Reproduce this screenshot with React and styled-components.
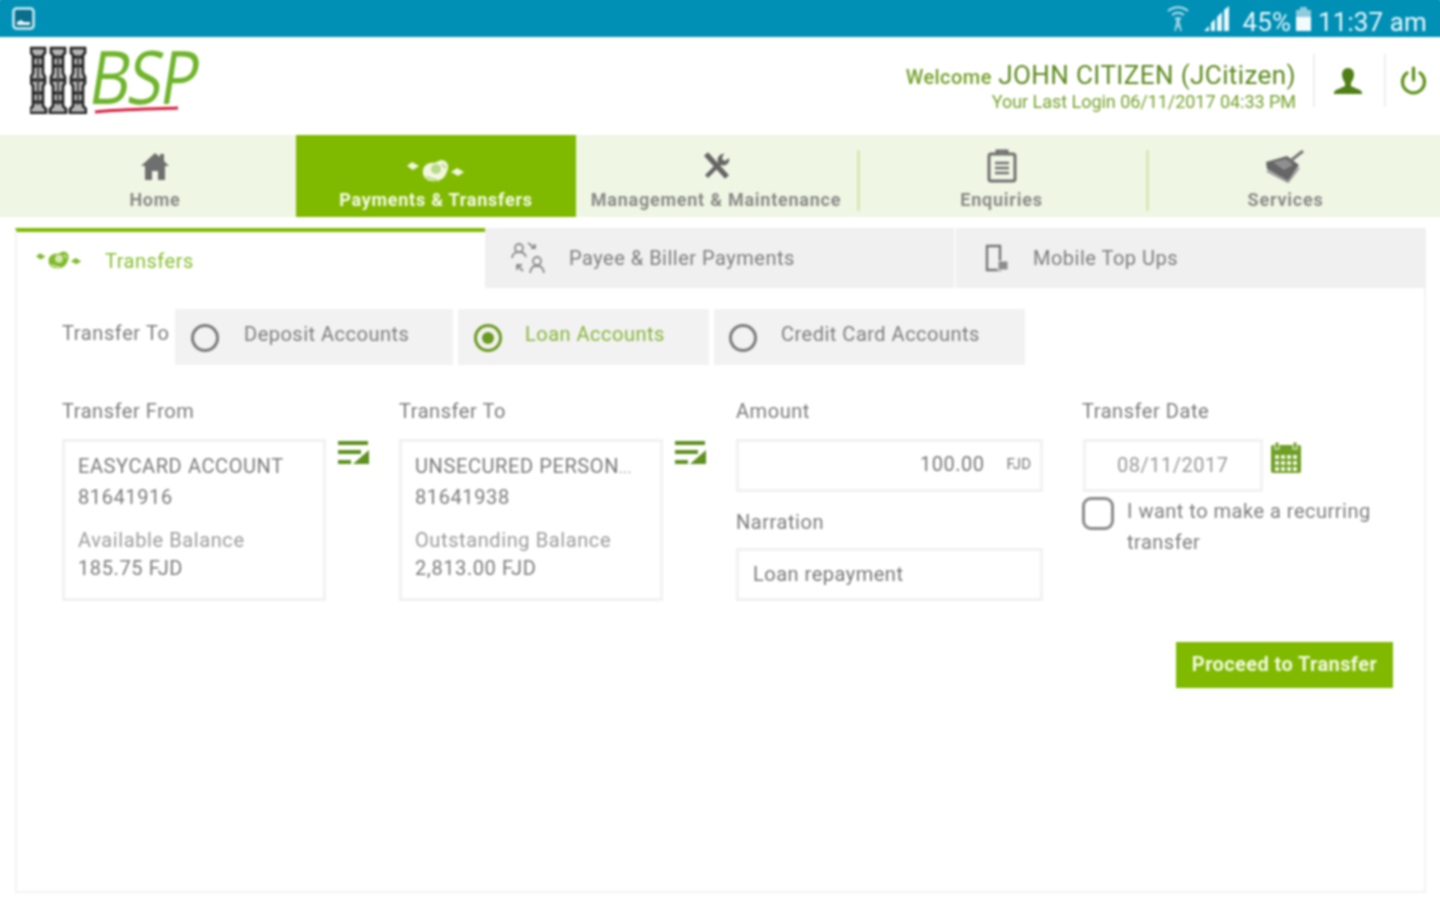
import React from "react";
import styled, { createGlobalStyle } from "styled-components";

const Global = createGlobalStyle`
  html, body { margin: 0; padding: 0; background: #fff; }
  body { font-family: Roboto, "Liberation Sans", sans-serif; width: 1440px; height: 900px; overflow: hidden; }
  * { box-sizing: border-box; }
`;
const Page = styled.div`width:1440px;height:900px;display:flex;flex-direction:column;filter:blur(.8px);`;
const StatusBar = styled.div`height:37px;background:#0090b5;box-shadow:0 -6px 0 #0090b5,-6px 0 0 #0090b5,6px 0 0 #0090b5;display:flex;align-items:center;justify-content:space-between;padding:0 13px 0 12px;color:#e8f6fa;`;
const StatusRight = styled.div`display:flex;align-items:center;font-size:26px;`;
const StatusText = styled.span`margin:${p => p.$m || 0};position:relative;top:3px;letter-spacing:.1px;`;
const Header = styled.header`height:98px;display:flex;justify-content:space-between;padding-left:30px;`;
const Logo = styled.div`display:flex;align-items:flex-start;padding-top:9px;gap:0;position:relative;`;
const LogoWord = styled.span`font-family:"Open Sans",sans-serif;font-weight:400;font-size:74px;line-height:60px;letter-spacing:-3px;color:#6fb52b;transform:skewX(-9deg) scaleX(.86);transform-origin:left center;margin-left:4px;display:block;`;
const Underline = styled.svg`position:absolute;left:64px;top:69px;`;
const UserArea = styled.div`display:flex;align-items:flex-start;padding-top:17px;`;
const Welcome = styled.div`text-align:right;padding:4px 17px 0 0;color:#74a22a;`;
const WelcomeTop = styled.div`font-size:20px;line-height:34px;font-weight:500;white-space:nowrap;letter-spacing:.45px;`;
const WelcomeName = styled.span`font-size:26px;font-weight:400;color:#5c8a1d;letter-spacing:.4px;margin-left:1px;`;
const LastLogin = styled.div`font-size:18px;line-height:22px;margin-top:-3px;letter-spacing:-.04px;white-space:nowrap;`;
const IconCell = styled.div`width:${p => p.$w}px;height:53px;border-left:2px solid #efefef;display:flex;align-items:center;justify-content:center;padding-right:${p => p.$pr || 0}px;`;
const Nav = styled.nav`display:grid;grid-template-columns:296px 280px 282px 289px 293px;height:82px;background:#f0f6e4;box-shadow:-6px 0 0 #f0f6e4,6px 0 0 #f0f6e4;`;
const NavItem = styled.div`position:relative;display:flex;flex-direction:column;align-items:center;padding:${p => p.$active ? 22 : 14}px ${p => p.$pr || 0}px 0 ${p => p.$pl || 0}px;background:${p => p.$active ? "#7fba00" : "transparent"};color:${p => p.$active ? "#f5fae8" : "#8a8a88"};
  ${p => p.$sep ? `&::after{content:"";position:absolute;right:-2px;top:15px;bottom:6px;width:3px;background:#dbe8b8;}` : ""}`;
const NavIconBox = styled.div`height:${p => p.$active ? 28 : 34}px;display:flex;align-items:center;justify-content:center;`;
const NavLabel = styled.div`font-size:18px;font-weight:700;line-height:22px;margin-top:${p => p.$active ? 4 : 6}px;white-space:nowrap;letter-spacing:.75px;`;
const Panel = styled.section`margin:11px 14px 7px 15px;flex:1;border:2px solid #f3f3f3;border-top:0;display:flex;flex-direction:column;`;
const Tabs = styled.div`display:grid;grid-template-columns:470px 471px 1fr;height:60px;margin:0 -2px 0 -2px;`;
const Tab = styled.div`display:flex;align-items:center;font-size:20px;padding-left:${p => p.$active ? 19 : p.$last ? 28 : 25}px;
  background:${p => p.$active ? "#fff" : "#f0f0f0"};color:${p => p.$active ? "#86bf2d" : "#7d7d7d"};
  border-top:${p => p.$active ? "4px solid #7fba00" : "0"};border-left:${p => p.$active ? "2px solid #f3f3f3" : "0"};
  border-right:${p => p.$last ? "0" : p.$active ? "0" : "2px solid #fafafa"};`;
const TabText = styled.span`margin-left:${p => p.$ml}px;letter-spacing:.5px;position:relative;top:${p => p.$active ? 1 : 0}px;`;
const RadioRow = styled.div`display:flex;margin:21px 0 0 45px;height:56px;`;
const RadioLabel = styled.div`width:113px;font-size:20px;line-height:48px;color:#7b7b7b;letter-spacing:.6px;`;
const RadioOption = styled.div`width:${p => p.$w}px;margin-right:5px;background:#f2f2f2;display:flex;padding-left:${p => p.$pad}px;`;
const RadioDot = styled.span`width:28px;height:28px;margin-top:15px;border-radius:50%;border:3px solid ${p => p.$on ? "#6a9a20" : "#7b7b7b"};display:flex;align-items:center;justify-content:center;flex:none;
  &::after{content:"";display:${p => p.$on ? "block" : "none"};width:12px;height:12px;border-radius:50%;background:#6a9a20;}`;
const RadioText = styled.span`font-size:20px;line-height:50px;margin-left:${p => p.$ml}px;letter-spacing:.5px;color:${p => p.$on ? "#86b53a" : "#7d7d7d"};`;
const Form = styled.div`display:grid;grid-template-columns:308px 308px 307px 1fr;column-gap:29px;margin:34px 0 0 45px;`;
const FormColumn = styled.div`display:flex;flex-direction:column;margin-left:${p => p.$ml || 0}px;`;
const FieldLabel = styled.div`font-size:20px;line-height:24px;color:#7b7b7b;letter-spacing:.55px;margin:${p => p.$m || "0 0 16px"};`;
const AccountRow = styled.div`display:flex;gap:12px;align-items:flex-start;`;
const AccountBox = styled.div`width:264px;height:162px;border:3px solid #f1f1f1;padding:9px 13px;color:#7b7b7b;font-size:20px;`;
const AccountLine = styled.div`line-height:${p => p.$lh || 31}px;white-space:nowrap;letter-spacing:.6px;color:${p => p.$soft ? "#9b9b9b" : "#7b7b7b"};margin-top:${p => p.$mt || 0}px;`;
const Ellipsis = styled.span`font-size:14px;line-height:0;`;
const EditSlot = styled.div`margin-top:2px;`;
const InputBox = styled.div`height:53px;border:3px solid #f1f1f1;display:flex;align-items:center;font-size:20px;color:${p => p.$soft ? "#999" : "#777"};letter-spacing:.5px;padding:${p => p.$pad};justify-content:${p => p.$end ? "flex-end" : "flex-start"};width:${p => p.$w ? p.$w + "px" : "auto"};`;
const Currency = styled.span`font-size:15px;margin-left:22px;letter-spacing:0;`;
const DateRow = styled.div`display:flex;gap:8px;align-items:flex-start;padding-left:1px;`;
const CalendarSlot = styled.div`margin-top:3px;`;
const CheckRow = styled.div`display:flex;margin-top:5px;`;
const CheckBox = styled.span`width:32px;height:33px;border:3px solid #8a8a8a;border-radius:9px;flex:none;`;
const CheckText = styled.div`font-size:20px;line-height:31px;color:#7d7d7d;margin-left:13px;letter-spacing:.5px;width:260px;margin-top:-1px;`;
const Actions = styled.div`display:flex;justify-content:flex-end;margin:41px 31px 0 0;`;
const PrimaryButton = styled.div`width:217px;height:46px;background:#7fba00;color:#f3f9e2;font-size:20px;font-weight:700;letter-spacing:.4px;display:flex;align-items:center;justify-content:center;padding-bottom:2px;`;

const Money = ({ color = "#f2f7e0", note = "#b9d98a", w = 58 }) => (
  <svg width={w} height={w * 0.45} viewBox="0 0 58 26">
    <path d="M0 8l5-4 7 4-6 4z" fill={color} />
    <path d="M44 14l6-4 7 4-6 4z" fill={color} />
    <path d="M16 12c1-5 6-8 11-7l7-3c5 0 8 4 7 9l-2 5c-2 5-8 8-14 7-6 0-10-5-9-11z" fill={color} />
    <circle cx="29" cy="11" r="5" fill={note} />
    <path d="M19 19l13 4M35 6l4 4" stroke={note} strokeWidth="2" />
  </svg>
);
const Columns = () => (
  <svg width="57" height="68" viewBox="0 0 57 68">
    {[0, 20, 40].map(x => (
      <g key={x} transform={`translate(${x} 0)`}>
        <path d="M1 2h14v5l-2 2v18l2 4v6l-2 3v20l3 3v4H0v-4l3-3V40L1 37v-6l2-4V9L1 7z" fill="#b5b5b5" stroke="#222" strokeWidth="2.6" />
        <path d="M3 11h10M3 20h10M2 34h12M4 47h9M4 56h9" stroke="#222" strokeWidth="2.8" />
        <path d="M8 9v50" stroke="#444" strokeWidth="2" />
      </g>
    ))}
  </svg>
);
const House = () => (
  <svg width="30" height="30" viewBox="0 0 30 30"><path d="M15 2L1 15h4v14h7v-9h6v9h7V15h4l-5-5V3h-4v3z" fill="#6f6f6f" /></svg>
);
const Tools = () => (
  <svg width="30" height="30" viewBox="0 0 30 30" fill="none"><path d="M5 3l21 23" stroke="#666" strokeWidth="5.5" /><path d="M24 3a6 6 0 0 0-7 8L4 24l3 3 13-13a6 6 0 0 0 8-7l-4 3-3-2 1-4z" fill="#666" /></svg>
);
const Clipboard = () => (
  <svg width="30" height="34" viewBox="0 0 30 34" fill="none" stroke="#707070" strokeWidth="3"><rect x="2" y="5" width="26" height="27" rx="2" /><path d="M10 5V2h10v3" /><path d="M8 14h14M8 19h14M8 24h14" strokeWidth="2.4" /></svg>
);
const Stamp = () => (
  <svg width="42" height="34" viewBox="0 0 42 34"><path d="M1 13l21-6 12 9-11 16L2 20z" fill="#666" /><path d="M8 13l13-3 7 6-9 5z" fill="#8f8f8f" /><path d="M24 13L38 2" stroke="#777" strokeWidth="3" /><path d="M2 22l21 11 11-14" stroke="#999" strokeWidth="2" fill="none" /></svg>
);
const People = () => (
  <svg width="36" height="34" viewBox="0 0 36 34" fill="none" stroke="#8b8b8b" strokeWidth="1.8"><circle cx="9" cy="7" r="4" /><path d="M2 17c1-5 3-6 7-6s6 1 7 5" /><circle cx="27" cy="20" r="4" /><path d="M20 32c1-6 3-7 7-7s6 1 7 7" /><path d="M18 2l7 5M25 3v4h-4M13 30l-6-6M7 29v-5h5" /></svg>
);
const Phone = () => (
  <svg width="26" height="28" viewBox="0 0 26 28" fill="none"><path d="M3 2h13v24H3z" stroke="#757575" strokeWidth="2.4" /><rect x="14" y="17" width="10" height="9" fill="#8d8d8d" stroke="#f0f0f0" /></svg>
);
const ListEdit = () => (
  <svg width="32" height="25" viewBox="0 0 32 25" fill="#5f9120"><rect x="0" y="0" width="30" height="4" /><rect x="0" y="9" width="23" height="4" /><rect x="0" y="19" width="13" height="4" /><path d="M31 9v14H15z" /></svg>
);
const Calendar = () => (
  <svg width="30" height="31" viewBox="0 0 30 31"><rect x="0" y="3" width="30" height="28" rx="2" fill="#6f9f25" /><rect x="4" y="0" width="4" height="7" fill="#6f9f25" stroke="#fff" /><rect x="22" y="0" width="4" height="7" fill="#6f9f25" stroke="#fff" />
    {[13, 19, 25].map(y => [4, 10, 16, 22].map(x => <rect key={x + "-" + y} x={x} y={y} width="4" height="4" fill="#eef5dd" />))}
  </svg>
);
const UserIcon = () => (
  <svg width="30" height="28" viewBox="0 0 30 28"><path d="M15 1c4 0 6 3 6 7 0 3-2 6-3 8v3c3 2 9 3 11 6v2H1v-2c2-3 8-4 11-6v-3c-1-2-3-5-3-8 0-4 2-7 6-7z" fill="#4f7f16" /></svg>
);
const Power = () => (
  <svg width="27" height="29" viewBox="0 0 27 29" fill="none" stroke="#5d9116" strokeWidth="3.2" strokeLinecap="round"><path d="M13.5 2v12" /><path d="M7 7a11 11 0 1 0 13 0" /></svg>
);
const ScreenshotIcon = () => (
  <svg width="23" height="23" viewBox="0 0 23 23"><rect x="1.5" y="1.5" width="20" height="20" rx="3" fill="#0a6f8f" stroke="#cdeef6" strokeWidth="2.5" /><path d="M5 18v-3l4-2 3 2h6v3z" fill="#e8f6fa" /></svg>
);
const Wifi = () => (
  <svg width="24" height="28" viewBox="0 0 24 28" fill="none" stroke="#b6dfe9" strokeWidth="2"><path d="M2 6c6-5 14-5 20 0M6 10c4-3 8-3 12 0M9 14c2-1 4-1 6 0" /><path d="M12 14l-3 12M12 14l3 12M10 21h4" strokeWidth="1.6" /></svg>
);
const Signal = () => (
  <svg width="28" height="26" viewBox="0 0 28 26" fill="#e8f6fa"><path d="M1 25l5-5v5zM8 25v-8l4-4v12zM14 25V11l5-5v19z" /><path d="M21 25V4l5-4v25z" /></svg>
);
const Battery = () => (
  <svg width="15" height="24" viewBox="0 0 15 24"><path d="M4 0h7v3h4v21H0V3h4z" fill="#8fcbdc" /><rect x="0" y="10" width="15" height="14" fill="#f2fafc" /></svg>
);

export default function App() {
  return (
    <Page>
      <Global />
      <StatusBar>
        <ScreenshotIcon />
        <StatusRight>
          <Wifi />
          <StatusText $m="0 0 0 13px"><Signal /></StatusText>
          <StatusText $m="0 5px 0 11px">45%</StatusText>
          <StatusText $m="0"><Battery /></StatusText>
          <StatusText $m="0 0 0 7px">11:37 am</StatusText>
        </StatusRight>
      </StatusBar>
      <Header>
        <Logo>
          <Columns />
          <LogoWord>BSP</LogoWord>
          <Underline width="86" height="8" viewBox="0 0 86 8"><path d="M1 6C25 3 60 3 84 2" stroke="#d8203f" strokeWidth="3" fill="none" /></Underline>
        </Logo>
        <UserArea>
          <Welcome>
            <WelcomeTop>Welcome <WelcomeName>JOHN CITIZEN (JCitizen)</WelcomeName></WelcomeTop>
            <LastLogin>Your Last Login 06/11/2017 04:33 PM</LastLogin>
          </Welcome>
          <IconCell $w={71} $pr={4}><UserIcon /></IconCell>
          <IconCell $w={56}><Power /></IconCell>
        </UserArea>
      </Header>
      <Nav>
        <NavItem $pl={14}><NavIconBox><House /></NavIconBox><NavLabel>Home</NavLabel></NavItem>
        <NavItem $active><NavIconBox $active><Money /></NavIconBox><NavLabel $active>Payments &amp; Transfers</NavLabel></NavItem>
        <NavItem $sep $pr={2}><NavIconBox><Tools /></NavIconBox><NavLabel>Management &amp; Maintenance</NavLabel></NavItem>
        <NavItem $sep $pr={2}><NavIconBox><Clipboard /></NavIconBox><NavLabel>Enquiries</NavLabel></NavItem>
        <NavItem $pr={16}><NavIconBox><Stamp /></NavIconBox><NavLabel>Services</NavLabel></NavItem>
      </Nav>
      <Panel>
        <Tabs>
          <Tab $active><Money color="#7fba2a" note="#d5e9b0" w={46} /><TabText $active $ml={23}>Transfers</TabText></Tab>
          <Tab><People /><TabText $ml={23}>Payee &amp; Biller Payments</TabText></Tab>
          <Tab $last><Phone /><TabText $ml={23}>Mobile Top Ups</TabText></Tab>
        </Tabs>
        <RadioRow>
          <RadioLabel>Transfer To</RadioLabel>
          <RadioOption $w={278} $pad={16}><RadioDot /><RadioText $ml={25}>Deposit Accounts</RadioText></RadioOption>
          <RadioOption $w={251} $pad={16}><RadioDot $on /><RadioText $on $ml={23}>Loan Accounts</RadioText></RadioOption>
          <RadioOption $w={311} $pad={15}><RadioDot /><RadioText $ml={24}>Credit Card Accounts</RadioText></RadioOption>
        </RadioRow>
        <Form>
          <FormColumn>
            <FieldLabel>Transfer From</FieldLabel>
            <AccountRow>
              <AccountBox>
                <AccountLine>EASYCARD ACCOUNT</AccountLine>
                <AccountLine>81641916</AccountLine>
                <AccountLine $soft $mt={12} $lh={30}>Available Balance</AccountLine>
                <AccountLine $lh={26}>185.75 FJD</AccountLine>
              </AccountBox>
              <EditSlot><ListEdit /></EditSlot>
            </AccountRow>
          </FormColumn>
          <FormColumn>
            <FieldLabel>Transfer To</FieldLabel>
            <AccountRow>
              <AccountBox>
                <AccountLine>UNSECURED PERSON<Ellipsis>...</Ellipsis></AccountLine>
                <AccountLine>81641938</AccountLine>
                <AccountLine $soft $mt={12} $lh={30}>Outstanding Balance</AccountLine>
                <AccountLine $lh={26}>2,813.00 FJD</AccountLine>
              </AccountBox>
              <EditSlot><ListEdit /></EditSlot>
            </AccountRow>
          </FormColumn>
          <FormColumn>
            <FieldLabel>Amount</FieldLabel>
            <InputBox $end $pad="0 9px 3px 0">100.00<Currency>FJD</Currency></InputBox>
            <FieldLabel $m="18px 0 14px">Narration</FieldLabel>
            <InputBox $pad="0 0 2px 14px">Loan repayment</InputBox>
          </FormColumn>
          <FormColumn $ml={10}>
            <FieldLabel>Transfer Date</FieldLabel>
            <DateRow>
              <InputBox $soft $w={180} $pad="0 0 2px 31px">08/11/2017</InputBox>
              <CalendarSlot><Calendar /></CalendarSlot>
            </DateRow>
            <CheckRow>
              <CheckBox />
              <CheckText>I want to make a recurring transfer</CheckText>
            </CheckRow>
          </FormColumn>
        </Form>
        <Actions><PrimaryButton>Proceed to Transfer</PrimaryButton></Actions>
      </Panel>
    </Page>
  );
}
